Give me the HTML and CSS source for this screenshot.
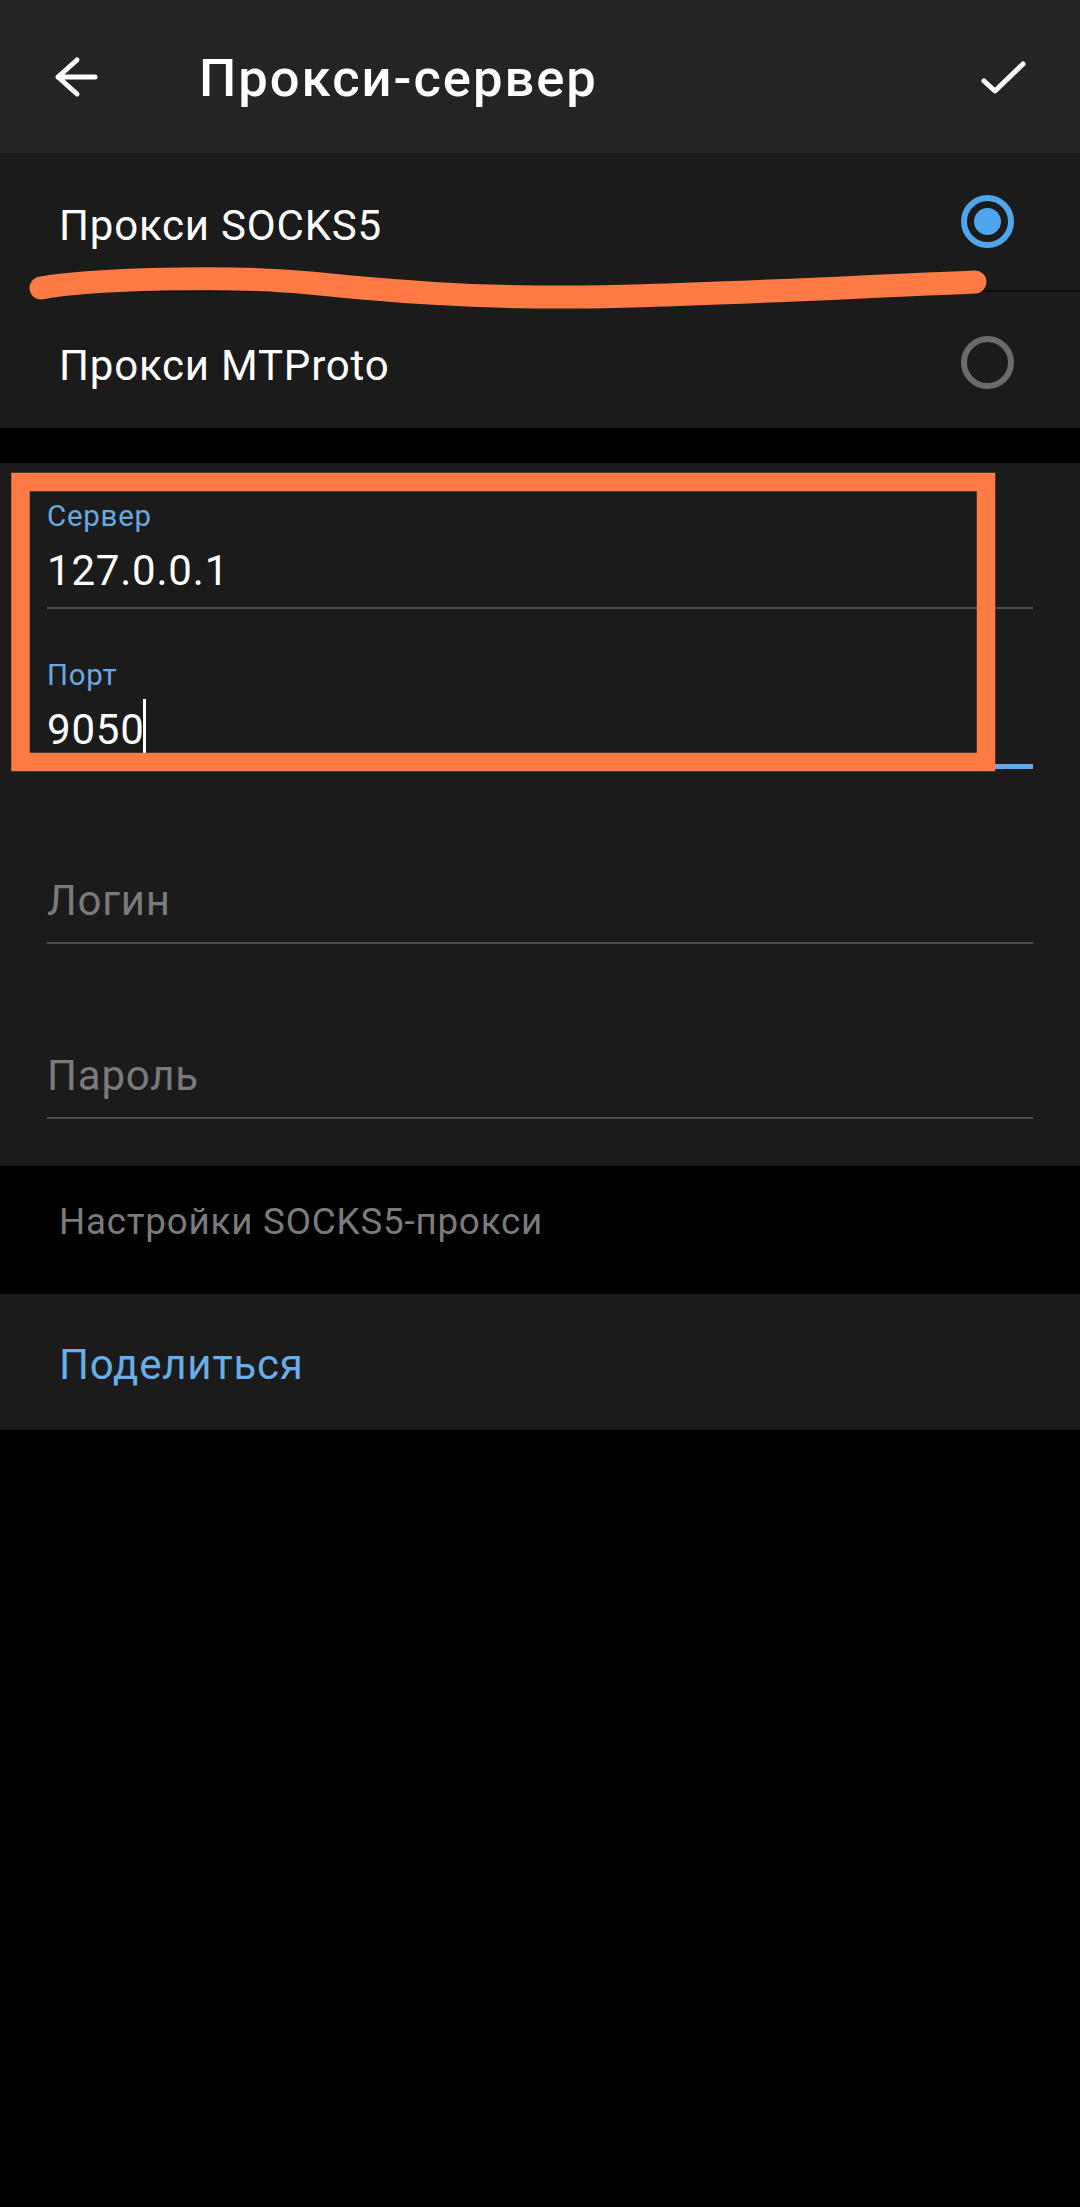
FILE: index.html
```html
<!DOCTYPE html>
<html lang="ru">
<head>
  <meta charset="UTF-8">
  <title>Прокси-сервер</title>
  <link rel="stylesheet" href="styles.css">
</head>
<body>
<div class="page">
  <!--шапка-->
  <div class="header">
    <svg class="back" width="48" height="48" viewBox="0 0 48 48">
      <path d="M6 24 H43 M25 7 L6 24 L25 41" fill="none" stroke="#fff" stroke-width="5" stroke-linecap="round" stroke-linejoin="round"/>
    </svg>
    <div class="title">Прокси-сервер</div>
    <svg class="done" width="80" height="80" viewBox="0 0 80 80">
      <path d="M24 44 L35 54 L63 27" fill="none" stroke="#fff" stroke-width="5" stroke-linecap="round" stroke-linejoin="round"/>
    </svg>
  </div>

  <!--тип прокси-->
  <div class="block types">
    <div class="row first">
      <span class="row-text">Прокси SOCKS5</span>
      <span class="radio checked"><i></i></span>
    </div>
    <div class="divider"></div>
    <div class="row second">
      <span class="row-text">Прокси MTProto</span>
      <span class="radio"></span>
    </div>
  </div>

  <div class="gap"></div>

  <!--поля-->
  <div class="block fields">
    <div class="field">
      <div class="field-label">Сервер</div>
      <div class="field-value">127.0.0.1</div>
    </div>
    <div class="field focused">
      <div class="field-label">Порт</div>
      <div class="field-value">9050<span class="cursor"></span></div>
    </div>
    <div class="field empty">
      <div class="field-value">Логин</div>
    </div>
    <div class="field empty">
      <div class="field-value">Пароль</div>
    </div>
  </div>

  <div class="hint">Настройки SOCKS5-прокси</div>

  <div class="block share">
    <span class="share-text">Поделиться</span>
  </div>

  <!--пометки поверх-->
  <svg class="marks" width="1080" height="800" viewBox="0 0 1080 800">
    <path d="M41 288 C 90 279, 230 275, 310 283 S 470 298, 580 297 S 850 287, 975 282" fill="none" stroke="#ff7b45" stroke-width="23" stroke-linecap="round" stroke-linejoin="round"/>
    <rect x="20.5" y="482" width="965.5" height="280" fill="none" stroke="#ff7b45" stroke-width="18.5"/>
  </svg>
</div>
</body>
</html>
```

FILE: styles.css
```css
* {
  margin: 0;
  padding: 0;
  box-sizing: border-box;
}

body {
  background: #000;
  font-family: Roboto, "Noto Sans", sans-serif;
  color: #fff;
  letter-spacing: 0.05em;
}

.page {
  position: relative;
  width: 1080px;
  min-height: 2207px;
  background: #000;
}

.header {
  height: 153px;
  background: #242426;
  display: flex;
  align-items: center;
  padding-left: 52px;
  padding-right: 40px;
}

.back {
  display: block;
  flex: none;
}

.title {
  margin-left: 99px;
  font-size: 52.5px;
  line-height: 62px;
  font-weight: 500;
  letter-spacing: 0.038em;
  margin-top: 2px;
}

.done {
  display: block;
  margin-left: auto;
}

.block {
  background: #1b1b1b;
}

.row {
  display: flex;
  align-items: center;
  padding-left: 59px;
  padding-right: 66px;
}

.row.first {
  height: 137px;
}

.row.second {
  height: 136px;
  padding-top: 4px;
}

.row-text {
  font-size: 42px;
  line-height: 50px;
  margin-top: 8px;
}

.radio {
  margin-left: auto;
  width: 53px;
  height: 53px;
  border: 6px solid #6b6b6b;
  border-radius: 50%;
  display: flex;
  align-items: center;
  justify-content: center;
}

.radio.checked {
  border-color: #4fa6ef;
}

.radio i {
  display: block;
  width: 27px;
  height: 27px;
  border-radius: 50%;
  background: #4fa6ef;
}

.divider {
  height: 2px;
  margin-left: 60px;
  background: #0b0b0b;
}

.gap {
  height: 35px;
}

.fields {
  padding: 0 47px 47px;
}

.field {
  padding-top: 48px;
  padding-bottom: 11px;
  border-bottom: 2px solid #4d4d4d;
}

.field:first-child {
  padding-top: 35px;
}

.field-label {
  font-size: 29.4px;
  line-height: 36px;
  color: #6aa8e2;
}

.field-value {
  margin-top: 12px;
  font-size: 42px;
  line-height: 50px;
  color: #fff;
}

.field.focused {
  padding-bottom: 9px;
  border-bottom: 5px solid #66a8e6;
}

.field.empty {
  padding-top: 59px;
  padding-bottom: 16px;
}

.field.empty .field-value {
  margin-top: 48px;
  color: #7a7a7a;
}

.cursor {
  display: inline-block;
  width: 3px;
  height: 54px;
  margin-top: -6px;
  margin-left: -2px;
  vertical-align: -9px;
  background: #fff;
}

.hint {
  padding: 34px 59px 50px;
  font-size: 36.75px;
  line-height: 44px;
  color: #7b7b7b;
}

.share {
  padding: 46px 59px 40px;
}

.share-text {
  display: block;
  font-size: 42px;
  line-height: 50px;
  color: #68aee8;
}

.marks {
  position: absolute;
  left: 0;
  top: 0;
  pointer-events: none;
}
```
